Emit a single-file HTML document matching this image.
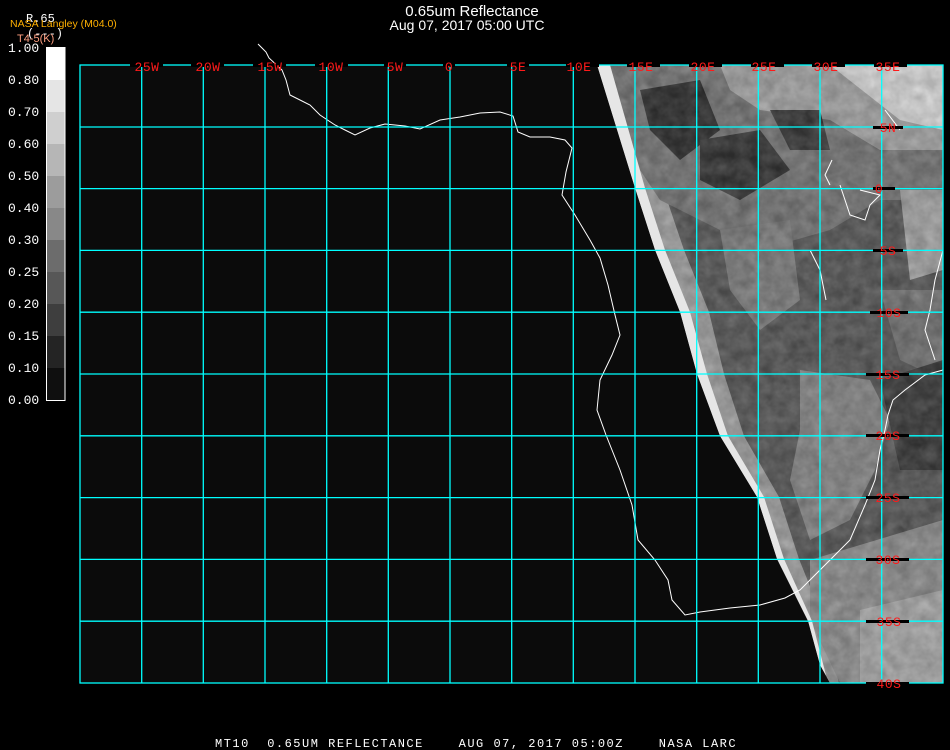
<!DOCTYPE html>
<html><head><meta charset="utf-8"><style>
html,body{margin:0;padding:0;background:#000;width:950px;height:750px;overflow:hidden}
svg{display:block}
text{font-family:"Liberation Mono",monospace}
</style></head><body>
<svg width="950" height="750" viewBox="0 0 950 750" xmlns="http://www.w3.org/2000/svg">
<defs>
<filter id="noise" x="0" y="0" width="100%" height="100%" color-interpolation-filters="sRGB">
<feTurbulence type="fractalNoise" baseFrequency="0.08" numOctaves="3" seed="4" result="n"/>
<feColorMatrix type="matrix" values="0.7 0.7 0.7 0 -0.6 0.7 0.7 0.7 0 -0.6 0.7 0.7 0.7 0 -0.6 0 0 0 0 0.15"/>
</filter>
<clipPath id="land"><polygon points="597,65 943,65 943,683 830,683 820,665 808,621 777,559 757,497 720,436 697,374 680,312 655,250 635,188"/></clipPath>
</defs>
<rect x="80" y="65" width="863" height="618" fill="#0b0b0b"/>
<g clip-path="url(#land)">
<rect x="590" y="65" width="360" height="620" fill="#555"/>
<polygon points="597,65 628,65 663,188 684,250 709,312 724,374 744,436 779,497 799,559 824,621 839,683 830,683 820,665 808,621 777,559 757,497 720,436 697,374 680,312 655,250 635,188" fill="#9a9a9a"/>
<polygon points="610,65 943,65 943,200 880,200 830,230 760,250 700,220 660,200 640,170" fill="#727272"/>
<polygon points="720,65 943,65 943,150 880,150 830,120 760,110 730,90" fill="#9e9e9e"/>
<polygon points="830,65 943,65 943,130 900,120" fill="#d0d0d0"/>
<polygon points="640,90 700,80 720,130 680,160 650,130" fill="#2e2e2e"/>
<polygon points="700,140 760,130 790,170 740,200 700,180" fill="#333"/>
<polygon points="770,110 820,110 830,150 790,150" fill="#383838"/>
<polygon points="720,230 790,220 800,300 760,330 730,290" fill="#7a7a7a"/>
<polygon points="900,190 943,190 943,270 910,280" fill="#a0a0a0"/>
<polygon points="880,290 943,290 943,380 900,360" fill="#707070"/>
<polygon points="800,370 870,380 890,420 875,470 850,520 810,540 790,480 800,430" fill="#828282"/>
<polygon points="810,560 943,520 943,683 840,683 810,620" fill="#8a8a8a"/>
<polygon points="860,610 943,590 943,683 860,683" fill="#a4a4a4"/>
<polygon points="880,380 943,360 943,470 900,470" fill="#383838"/>
<rect x="590" y="65" width="360" height="620" filter="url(#noise)"/>
<polygon points="597,65 610,65 645,188 665,250 690,312 707,374 728,436 764,497 784,559 812,621 828,683 830,683 820,665 808,621 777,559 757,497 720,436 697,374 680,312 655,250 635,188" fill="#e6e6e6"/>
</g>
<g fill="none" stroke="#fff" stroke-width="1">
<polyline points="258,44 262,48 266,52 269,58 282,70 286,80 290,95 300,100 310,105 320,115 335,125 345,130 355,135 370,128 385,124 405,126 420,129 440,120 460,117 480,113 500,112 513,116 518,132 530,137 550,137 565,140 572,148 566,172 562,195 575,215 590,240 600,258 608,285 615,315 620,335 612,355 600,380 597,410 606,435 620,470 632,505 638,540 655,560 668,580 672,600 685,615 700,612 730,608 760,605 785,598 800,590 815,575 830,560 850,540 865,505 875,480 880,450 885,430 888,415 893,400 905,390 925,375 943,370"/>
<polyline points="832,160 825,175 830,185"/>
<polyline points="840,185 845,200 850,215 865,220 870,205 880,195 860,190"/>
<polyline points="810,250 820,270 826,300"/>
<polyline points="943,250 935,280 930,310 925,330 935,360"/>
<polyline points="885,110 900,130"/>
</g>
<g stroke="#00ffff" stroke-width="1.3" fill="none">
<rect x="80" y="65" width="863" height="618"/>
<line x1="141.7" y1="65" x2="141.7" y2="683"/><line x1="203.3" y1="65" x2="203.3" y2="683"/><line x1="265" y1="65" x2="265" y2="683"/><line x1="326.7" y1="65" x2="326.7" y2="683"/><line x1="388.3" y1="65" x2="388.3" y2="683"/><line x1="450" y1="65" x2="450" y2="683"/><line x1="511.7" y1="65" x2="511.7" y2="683"/><line x1="573.3" y1="65" x2="573.3" y2="683"/><line x1="635" y1="65" x2="635" y2="683"/><line x1="696.7" y1="65" x2="696.7" y2="683"/><line x1="758.3" y1="65" x2="758.3" y2="683"/><line x1="820" y1="65" x2="820" y2="683"/><line x1="881.7" y1="65" x2="881.7" y2="683"/>
<line x1="80" y1="127" x2="943" y2="127"/><line x1="80" y1="188.6" x2="943" y2="188.6"/><line x1="80" y1="250.4" x2="943" y2="250.4"/><line x1="80" y1="312.2" x2="943" y2="312.2"/><line x1="80" y1="374" x2="943" y2="374"/><line x1="80" y1="435.8" x2="943" y2="435.8"/><line x1="80" y1="497.6" x2="943" y2="497.6"/><line x1="80" y1="559.4" x2="943" y2="559.4"/><line x1="80" y1="621.2" x2="943" y2="621.2"/>
</g>
<g fill="#000">
<rect x="130" y="64" width="33" height="3"/><rect x="191" y="64" width="33" height="3"/><rect x="253" y="64" width="33" height="3"/><rect x="315" y="64" width="33" height="3"/><rect x="384" y="64" width="22" height="3"/><rect x="443" y="64" width="12" height="3"/><rect x="507" y="64" width="22" height="3"/><rect x="566" y="64" width="33" height="3"/><rect x="627" y="64" width="33" height="3"/><rect x="689" y="64" width="33" height="3"/><rect x="751" y="64" width="33" height="3"/><rect x="812" y="64" width="33" height="3"/><rect x="874" y="64" width="33" height="3"/>
<rect x="873" y="126" width="30" height="3"/><rect x="873" y="187" width="22" height="3"/><rect x="873" y="249" width="30" height="3"/><rect x="870" y="311" width="38" height="3"/><rect x="866" y="373" width="43" height="3"/><rect x="866" y="434" width="43" height="3"/><rect x="866" y="496" width="43" height="3"/><rect x="866" y="558" width="43" height="3"/><rect x="866" y="620" width="43" height="3"/><rect x="866" y="682" width="43" height="3"/>
</g>
<g fill="#ff1a1a" font-size="13" text-anchor="middle" letter-spacing="0.5">
<text x="147" y="71">25W</text><text x="208" y="71">20W</text><text x="270" y="71">15W</text><text x="331" y="71">10W</text><text x="395" y="71">5W</text><text x="449" y="71">0</text><text x="518" y="71">5E</text><text x="579" y="71">10E</text><text x="641" y="71">15E</text><text x="703" y="71">20E</text><text x="764" y="71">25E</text><text x="826" y="71">30E</text><text x="888" y="71">35E</text>
<text x="888" y="132">5N</text><text x="879" y="193">0</text><text x="888" y="255">5S</text><text x="889" y="317">10S</text><text x="888" y="379">15S</text><text x="888" y="440">20S</text><text x="888" y="502">25S</text><text x="888" y="564">30S</text><text x="889" y="626">35S</text><text x="889" y="688">40S</text>
</g>
<text x="472" y="16" fill="#fff" font-size="15" text-anchor="middle" style="font-family:'Liberation Sans',sans-serif">0.65um Reflectance</text>
<text x="467" y="30" fill="#fff" font-size="14" text-anchor="middle" style="font-family:'Liberation Sans',sans-serif">Aug 07, 2017 05:00 UTC</text>
<text x="26" y="22" fill="#fff" font-size="12">R.65</text>
<text x="27" y="37" fill="#fff" font-size="12">(---)</text>
<text x="10" y="27" fill="#ffb000" font-size="10.5" style="font-family:'Liberation Sans',sans-serif">NASA Langley (M04.0)</text>
<text x="17" y="42" fill="#ff9f80" font-size="11" style="font-family:'Liberation Sans',sans-serif">T4-5(K)</text>
<rect x="46" y="47" width="19" height="33" fill="#fff"/>
<rect x="46" y="80" width="19" height="32" fill="#e5e5e5"/>
<rect x="46" y="112" width="19" height="32" fill="#cfcfcf"/>
<rect x="46" y="144" width="19" height="32" fill="#b6b6b6"/>
<rect x="46" y="176" width="19" height="32" fill="#9c9c9c"/>
<rect x="46" y="208" width="19" height="32" fill="#888"/>
<rect x="46" y="240" width="19" height="32" fill="#6c6c6c"/>
<rect x="46" y="272" width="19" height="32" fill="#575757"/>
<rect x="46" y="304" width="19" height="32" fill="#3e3e3e"/>
<rect x="46" y="336" width="19" height="32" fill="#242424"/>
<rect x="46" y="368" width="19" height="32" fill="#0f0f0f"/>
<rect x="46.5" y="47.5" width="18.5" height="353" fill="none" stroke="#fff" stroke-width="1"/>
<g fill="#fff" font-size="13">
<text x="8" y="52">1.00</text><text x="8" y="84">0.80</text><text x="8" y="116">0.70</text><text x="8" y="148">0.60</text><text x="8" y="180">0.50</text><text x="8" y="212">0.40</text><text x="8" y="244">0.30</text><text x="8" y="276">0.25</text><text x="8" y="308">0.20</text><text x="8" y="340">0.15</text><text x="8" y="372">0.10</text><text x="8" y="404">0.00</text>
</g>
<text x="215" y="747" fill="#fff" font-size="12" letter-spacing="1.5" xml:space="preserve">MT10  0.65UM REFLECTANCE    AUG 07, 2017 05:00Z    NASA LARC</text>
</svg>
</body></html>
